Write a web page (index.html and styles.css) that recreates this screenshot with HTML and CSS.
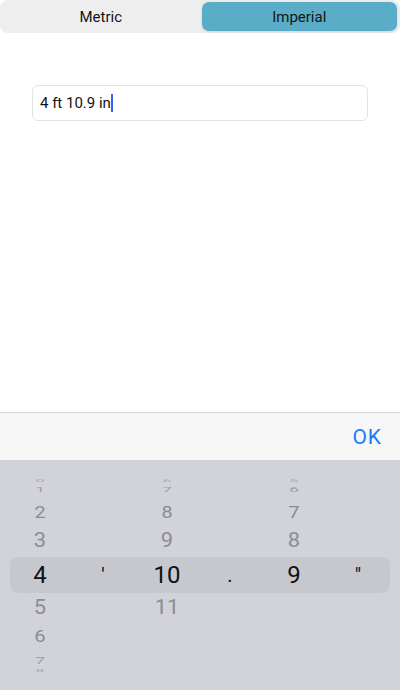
FILE: index.html
```html
<!DOCTYPE html>
<html>
<head>
<meta charset="utf-8">
<link rel="stylesheet" href="styles.css">
</head>
<body>
<div class="screen">
  <div class="segmented">
    <div class="seg">Metric</div>
    <div class="seg seg-active">Imperial</div>
  </div>
  <div class="content">
    <div class="field"><span class="value">4 ft 10.9 in</span><span class="caret"></span></div>
  </div>
  <div class="toolbar"><span class="ok">OK</span></div>
  <div class="picker">
    <div class="row r-4"><span>0</span><span></span><span>6</span><span></span><span>5</span><span></span></div>
    <div class="row r-3"><span>1</span><span></span><span>7</span><span></span><span>6</span><span></span></div>
    <div class="row r-2"><span>2</span><span></span><span>8</span><span></span><span>7</span><span></span></div>
    <div class="row r-1"><span>3</span><span></span><span>9</span><span></span><span>8</span><span></span></div>
    <div class="row r0"><span>4</span><span class="unit">'</span><span>10</span><span class="unit">.</span><span>9</span><span class="unit">"</span></div>
    <div class="row r1"><span>5</span><span></span><span>11</span><span></span><span></span><span></span></div>
    <div class="row r2"><span>6</span><span></span><span></span><span></span><span></span><span></span></div>
    <div class="row r3"><span>7</span><span></span><span></span><span></span><span></span><span></span></div>
    <div class="row r4"><span>8</span><span></span><span></span><span></span><span></span><span></span></div>
  </div>
</div>
</body>
</html>
```
FILE: styles.css
```css
* { box-sizing: border-box; }
html, body { margin: 0; padding: 0; }
body {
  width: 400px;
  height: 690px;
  overflow: hidden;
  background: #ffffff;
  font-family: Roboto, "Liberation Sans", sans-serif;
  color: #111;
}
.screen {
  display: flex;
  flex-direction: column;
  height: 690px;
}
.segmented {
  height: 33px;
  background: #eeeeee;
  border-radius: 8px;
  padding: 2px 3px;
  display: grid;
  grid-template-columns: 1fr 1fr;
  column-gap: 3px;
}
.seg {
  display: flex;
  align-items: center;
  justify-content: center;
  font-size: 15px;
  color: #141414;
  border-radius: 7px;
}
.seg-active {
  background: #59adc7;
  box-shadow: 0 1px 3px rgba(0,0,0,0.12);
}
.content {
  flex: 1;
  padding: 52px 32px 0;
}
.field {
  height: 36px;
  border: 1px solid #e2e2e2;
  border-radius: 6px;
  padding-left: 7px;
  display: flex;
  align-items: center;
  font-size: 15px;
  color: #111;
}
.caret {
  display: inline-block;
  width: 2px;
  height: 18px;
  background: #3d5ef0;
  margin-left: 0;
}
.toolbar {
  height: 48px;
  border-top: 1px solid #d6d6d6;
  background: #f7f7f7;
  display: flex;
  align-items: center;
  justify-content: flex-end;
  padding-right: 18px;
}
.ok {
  font-size: 21px;
  letter-spacing: 1px;
  color: #1b7cf6;
}
.picker {
  height: 230px;
  background: #d1d3d8;
  padding-top: 17px;
  overflow: hidden;
}
.row {
  margin: 0 10px;
  display: grid;
  grid-template-columns: 60px 66px 62px 64px 64px 64px;
  font-size: 23px;
  color: #8c8c91;
  text-align: center;
}
.row span {
  display: inline-block;
}
.r-4 { height: 8px; line-height: 8px; color: #a9aaae; }
.r-4 span { transform: scale(0.7, 0.12); }
.r-3 { height: 10px; line-height: 10px; color: #9fa0a4; }
.r-3 span { transform: scale(0.75, 0.35); }
.r-2 { height: 24px; line-height: 24px; margin-top: 6px; }
.r-2 span { transform: scale(0.86, 0.72); }
.r-1 { height: 28px; line-height: 28px; margin-top: 2px; }
.r-1 span { transform: scale(0.95, 0.9); }
.r0 {
  height: 36px;
  line-height: 36px;
  margin-top: 2px;
  background: #c7c8cd;
  border-radius: 8px;
  font-size: 24px;
  color: #111;
}
.r0 .unit { font-size: 20px; }
.r1 { height: 28px; line-height: 28px; margin-top: 1px; }
.r1 span { transform: scale(0.95, 0.88); }
.r2 { height: 24px; line-height: 24px; margin-top: 3px; }
.r2 span { transform: scale(0.88, 0.72); }
.r3 { height: 14px; line-height: 14px; margin-top: 5px; color: #9fa0a4; }
.r3 span { transform: scale(0.78, 0.4); }
.r4 { height: 6px; line-height: 6px; color: #a9aaae; }
.r4 span { transform: scale(0.7, 0.12); }
```
